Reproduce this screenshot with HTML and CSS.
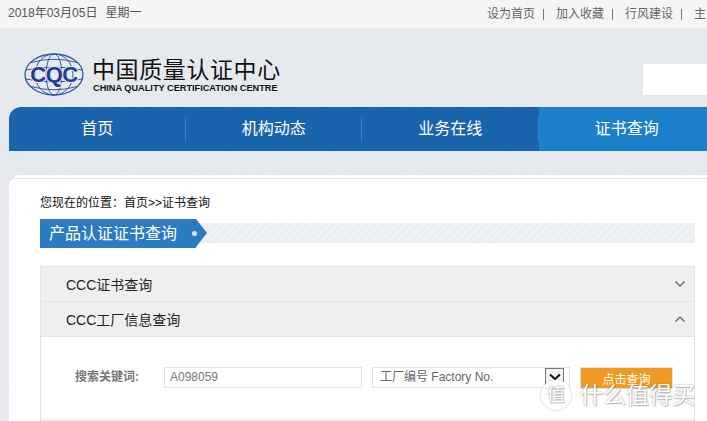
FILE: index.html
```html
<!DOCTYPE html>
<html lang="zh-CN">
<head>
<meta charset="utf-8">
<title>中国质量认证中心</title>
<link rel="stylesheet" href="styles.css">
</head>
<body>
<div class="topbar">
  <div class="date"><span>2018年03月05日</span><span>星期一</span></div>
  <ul class="toplinks">
    <li>设为首页</li>
    <li>加入收藏</li>
    <li>行风建设</li>
    <li>主</li>
  </ul>
</div>
<header class="header">
  <div class="brand">
    <svg class="logo" width="60" height="43" viewBox="0 0 60 43" fill="none" stroke="#2f57a8" stroke-width="1">
      <ellipse cx="30" cy="21.5" rx="29" ry="20.5" stroke-width="1.3"/>
      <ellipse cx="30" cy="21.5" rx="19" ry="20.5"/>
      <ellipse cx="30" cy="21.5" rx="8" ry="20.5"/>
      <path d="M7 9.5Q30 3 53 9.5M2 17Q30 11 58 17M2 26Q30 32 58 26M7 33.5Q30 40 53 33.5"/>
      <text class="logo-text" x="30" y="28.5" text-anchor="middle">CQC</text>
    </svg>
    <div class="brand-text">
      <div class="brand-cn">中国质量认证中心</div>
      <div class="brand-en">CHINA QUALITY CERTIFICATION CENTRE</div>
    </div>
  </div>
  <div class="searchbox"></div>
</header>
<nav class="nav">
  <a class="nav-item">首页</a>
  <a class="nav-item">机构动态</a>
  <a class="nav-item">业务在线</a>
  <a class="nav-item active">证书查询</a>
</nav>
<main class="card">
  <div class="crumb">您现在的位置：首页&gt;&gt;证书查询</div>
  <div class="section-title">
    <div class="section-flag">产品认证证书查询<i class="dot"></i></div>
  </div>
  <section class="accordion">
    <div class="acc-head">
      <span>CCC证书查询</span>
      <svg width="10" height="6" viewBox="0 0 10 6" fill="none" stroke="#555" stroke-width="1.1"><path d="M.5.5 5 5 9.500.5"/></svg>
    </div>
    <div class="acc-head">
      <span>CCC工厂信息查询</span>
      <svg width="10" height="6" viewBox="0 0 10 6" fill="none" stroke="#555" stroke-width="1.1"><path d="M.5 5.500 5 1l4.500 4.500"/></svg>
    </div>
    <div class="acc-body">
      <label class="field-label">搜索关键词:</label>
      <div class="input">A098059</div>
      <div class="select">
        <span>工厂编号 Factory No.</span>
        <span class="select-arrow">
          <svg width="12" height="6" viewBox="0 0 12 6" fill="none" stroke="#111" stroke-width="2"><path d="M1 .5 6 5 11 .5"/></svg>
        </span>
      </div>
      <button class="btn" type="button">点击查询</button>
    </div>
    <div class="acc-foot"></div>
  </section>
</main>
<div class="watermark">
  <span class="wm-circle">值</span>
  <span class="wm-text">什么值得买</span>
</div>
</body>
</html>
```
FILE: styles.css
```css
* { box-sizing: border-box; }
html, body { margin: 0; padding: 0; }
body {
  width: 707px;
  height: 421px;
  overflow: hidden;
  position: relative;
  font-family: "Liberation Sans", "Noto Sans CJK SC", sans-serif;
  font-size: 12px;
  color: #333;
  background-color: #e6e9ed;
  background-image:
    repeating-linear-gradient(45deg, rgba(255,255,255,.14) 0 1px, transparent 1px 3px),
    repeating-linear-gradient(-45deg, rgba(120,130,145,.03) 0 1px, transparent 1px 3px);
}
.topbar {
  height: 29px;
  background: #f5f5f5;
  border-bottom: 1px solid #ececec;
  display: flex;
  justify-content: space-between;
  padding-left: 8px;
  line-height: 26px;
  color: #666;
  white-space: nowrap;
}
.date { display: flex; gap: 8px; color: #555; }
.toplinks {
  list-style: none;
  margin: 0;
  padding: 0;
  display: flex;
  width: 220px;
  flex: none;
}
.toplinks li { display: flex; align-items: center; }
.toplinks li::after {
  content: "";
  width: 1px;
  height: 11px;
  background: #777;
  margin: 0 12px 0 8px;
}
.toplinks li:last-child::after { display: none; }
.header {
  height: 78px;
  display: flex;
  justify-content: space-between;
  padding: 24px 0 0 24px;
}
.brand { display: flex; gap: 9px; align-items: flex-start; }
.logo { display: block; flex: none; }
.logo-text {
  font: 700 22px "Liberation Sans", sans-serif;
  letter-spacing: -.5px;
  fill: #1f3c92;
  stroke: #e6e9ed;
  stroke-width: 2px;
  paint-order: stroke;
}
.brand-text { padding-top: 4px; color: #111; }
.brand-cn {
  font-size: 23px;
  line-height: 26px;
  letter-spacing: .6px;
  margin-left: -1px;
  white-space: nowrap;
}
.brand-en {
  font-size: 9.200px;
  font-weight: 700;
  line-height: 10px;
  white-space: nowrap;
}
.searchbox {
  width: 64px;
  height: 32px;
  margin-top: 11px;
  background: #fff;
  border-bottom: 1px solid #e3e3e3;
}
.nav {
  width: 706px;
  height: 44px;
  margin-left: 9px;
  display: grid;
  grid-template-columns: repeat(4, 1fr);
  background: #1a64ae;
  border-radius: 12px 0 0 0;
}
.nav-item {
  position: relative;
  color: #fff;
  font-size: 16px;
  line-height: 44px;
  text-align: center;
}
.nav-item::after {
  content: "";
  position: absolute;
  right: 0;
  top: 10px;
  width: 1px;
  height: 24px;
  background: #3f7fbb;
}
.nav-item.active { background: #1b7fca; }
.nav-item.active::after { display: none; }
.card {
  width: 698px;
  height: 243px;
  margin: 27px 0 0 9px;
  padding: 16px 12px 0 31px;
  background: #fff;
  border-top: 1px solid #e6e6e6;
  border-radius: 6px 0 0 0;
  box-shadow: 4px -3px 0 0 #fff;
}
.crumb {
  color: #111;
  line-height: 16px;
  margin-bottom: 12px;
  white-space: nowrap;
}
.section-title {
  height: 20px;
  margin: 5px 0 23px;
  background: repeating-linear-gradient(135deg, #eff2f4 0 3px, #eaedf1 3px 6px);
  display: flex;
  align-items: center;
  width: 655px;
}
.section-flag {
  position: relative;
  width: 156px;
  height: 29px;
  padding-left: 9px;
  background: #2a7bbf;
  color: #fff;
  font-size: 16px;
  line-height: 29px;
  white-space: nowrap;
}
.section-flag::after {
  content: "";
  position: absolute;
  left: 156px;
  top: 0;
  border-left: 11px solid #2a7bbf;
  border-top: 14.500px solid transparent;
  border-bottom: 14.500px solid transparent;
}
.dot {
  position: absolute;
  z-index: 1;
  left: 152px;
  top: 12px;
  width: 5px;
  height: 5px;
  border-radius: 50%;
  background: #dbe8f3;
}
.accordion {
  width: 655px;
  border: 1px solid #e3e3e3;
  border-bottom: 0;
}
.acc-head {
  height: 35px;
  padding: 0 9px 0 25px;
  background: #efefef;
  border-bottom: 1px solid #e3e3e3;
  display: flex;
  align-items: center;
  justify-content: space-between;
  font-size: 14px;
  color: #222;
}
.acc-body {
  height: 82px;
  padding: 30px 21px 0 34px;
  display: flex;
  align-items: flex-start;
}
.field-label {
  width: 89px;
  flex: none;
  line-height: 21px;
  font-weight: 700;
  color: #777;
}
.input, .select {
  width: 198px;
  height: 21px;
  flex: none;
  border: 1px solid #e3e3e3;
  line-height: 19px;
  color: #777;
}
.input { padding-left: 5px; margin-right: 10px; }
.select {
  position: relative;
  padding-left: 7px;
  margin-right: 10px;
  color: #666;
}
.select-arrow {
  position: absolute;
  right: 5px;
  top: 0;
  width: 19px;
  height: 21px;
  background: #f4f4f4;
  border: 1px solid #777;
  display: flex;
  justify-content: center;
  padding-top: 5px;
}
.select-arrow svg { display: block; }
.btn {
  width: 93px;
  height: 22px;
  flex: none;
  padding: 3px 0 0;
  border: 1px solid #e3dfd6;
  background: #ef9b23;
  color: #fff;
  font: 12px/18px "Liberation Sans", "Noto Sans CJK SC", sans-serif;
}
.acc-foot {
  height: 2px;
  background: #efefef;
}
.watermark {
  position: absolute;
  left: 541px;
  top: 380px;
  display: flex;
  align-items: center;
  gap: 9px;
  color: #fff;
  white-space: nowrap;
  text-shadow: 0 0 2px rgba(90,90,90,.6), 1px 1px 1px rgba(120,120,120,.4);
}
.wm-circle {
  width: 30px;
  height: 30px;
  border: 2px solid rgba(255,255,255,.95);
  border-radius: 50%;
  background: rgba(255,255,255,.8);
  box-shadow: 0 0 2px rgba(90,90,90,.5);
  font-size: 18px;
  line-height: 26px;
  text-align: center;
}
.wm-text { font-size: 23px; line-height: 28px; }
```
